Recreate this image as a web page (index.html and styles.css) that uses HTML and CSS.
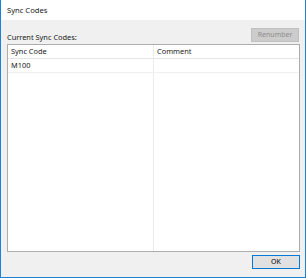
FILE: index.html
```html
<!DOCTYPE html>
<html lang="en">
<head>
  <meta charset="UTF-8" />
  <title>Sync Codes</title>
  <link rel="stylesheet" href="styles.css">
</head>
<body>

  <div class="window">
    <div class="titlebar">Sync Codes</div>

    <div class="content">
      <div class="top-row">
        <span class="label">Current Sync Codes:</span>
        <button class="btn renumber" disabled>Renumber</button>
      </div>

      <div class="list">
        <div class="list-row list-head">
          <div class="cell">Sync Code</div>
          <div class="cell">Comment</div>
        </div>
        <div class="list-row">
          <div class="cell">M100</div>
          <div class="cell"></div>
        </div>
        <div class="list-fill">
          <div class="cell"></div>
          <div class="cell"></div>
        </div>
      </div>

      <div class="bottom-row">
        <button class="btn ok">OK</button>
      </div>
    </div>
  </div>

</body>
</html>
```

FILE: styles.css
```css
body {
  margin: 0;
  font-family: 'Noto Sans', sans-serif;
  font-size: 7.4px;
  color: #1a1a1a;
}

.window {
  width: 306px;
  height: 278px;
  box-sizing: border-box;
  border: 1px solid #1883d7;
  border-top: none;
  display: flex;
  flex-direction: column;
}

.titlebar {
  height: 20px;
  line-height: 20px;
  padding-left: 6px;
  background: #fff;
  font-size: 7.6px;
}

.content {
  flex: 1;
  background: #f0f0f0;
  padding: 8px 5px 8px 6px;
  display: flex;
  flex-direction: column;
}

.top-row {
  display: flex;
  align-items: flex-end;
  justify-content: space-between;
  height: 16px;
}

.label {
  line-height: 12px;
  margin-bottom: 1px;
}

.btn {
  font-family: inherit;
  font-size: 7px;
  width: 48px;
  height: 14px;
  padding: 0;
  box-sizing: border-box;
  line-height: 12px;
}

.renumber {
  align-self: flex-start;
  background: #cccccc;
  border: 1px solid #bfbfbf;
  color: #8d8d8d;
  margin-right: 1px;
}

.list {
  flex: 1;
  background: #fff;
  border: 1px solid #adadad;
  display: flex;
  flex-direction: column;
}

.list-row, .list-fill {
  display: grid;
  grid-template-columns: 146px 1fr;
}

.list-row {
  height: 13px;
  border-bottom: 1px solid #f0f0f0;
}

.list-head {
  border-bottom-color: #e5e5e5;
}

.list-fill {
  flex: 1;
}

.cell {
  padding-left: 3px;
  line-height: 13px;
  border-right: 1px solid #ececec;
}

.cell:last-child {
  border-right: none;
}

.bottom-row {
  display: flex;
  justify-content: flex-end;
  margin-top: 3px;
}

.ok {
  background: #e1e1e1;
  border: 1px solid #0078d7;
  color: #000;
}
```
